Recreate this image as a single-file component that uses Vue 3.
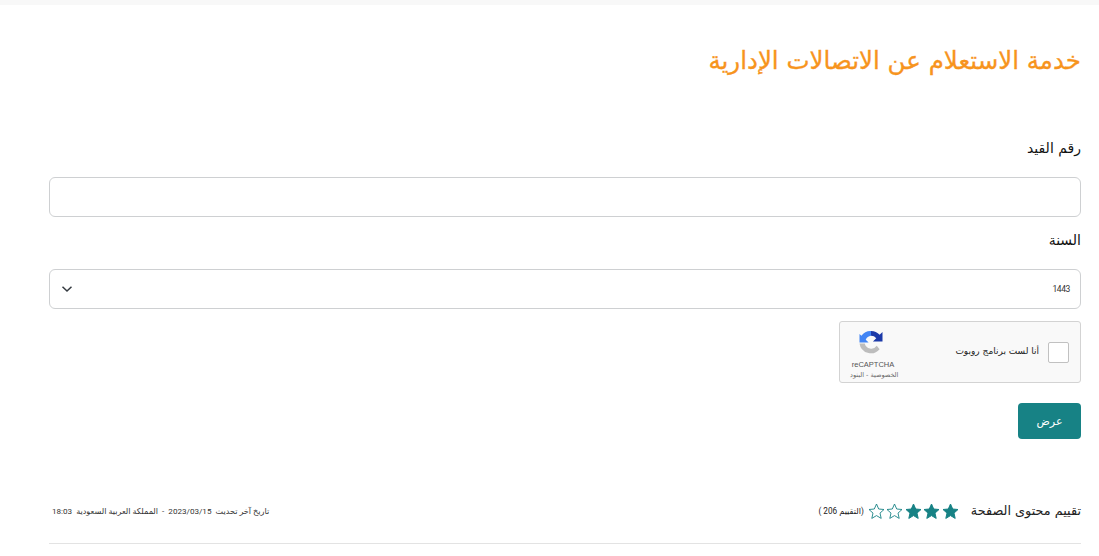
<script setup>
const filled = [1, 2, 3]
const empty = [4, 5]
const starPath = 'M8.5 1l2.2 5 5.3.5-4 3.6 1.2 5.3-4.7-2.8-4.7 2.8 1.2-5.3-4-3.6 5.3-.5z'
</script>

<template>
  <div class="page" dir="rtl">
    <div class="strip"></div>
    <main class="content">
      <h1 class="title">خدمة الاستعلام عن الاتصالات الإدارية</h1>

      <form class="form" @submit.prevent>
        <label class="label first">رقم القيد</label>
        <input class="control" type="text" />

        <label class="label second">السنة</label>
        <div class="select">
          <span class="select-value">1443</span>
          <svg class="chevron" width="12" height="8" viewBox="0 0 12 8" fill="none">
            <path d="M1.5 1.8 6 6l4.500-4.200" stroke="#343a40" stroke-width="1.500" />
          </svg>
        </div>

        <div class="captcha">
          <span class="check"></span>
          <span class="captcha-text">أنا لست برنامج روبوت</span>
          <div class="captcha-brand">
            <svg class="captcha-logo" width="24" height="23" viewBox="0 0 24 24">
              <path d="M12 0A12 12 0 0 1 21 4L24 1V11H14L17.500 7.500A7 7 0 0 0 12 5Z" fill="#1c3aa9" />
              <path d="M12 0A12 12 0 0 0 2 5L0 3V12H9.500L6.500 9A7 7 0 0 1 12 5Z" fill="#4285f4" />
              <path d="M0 13H5.500A7 7 0 0 0 18 15.500L21 19A12 12 0 0 1 0 13Z" fill="#bdbdbd" />
            </svg>
            <span class="brand-name" dir="ltr">reCAPTCHA</span>
            <span class="brand-links">الخصوصية - البنود</span>
          </div>
        </div>

        <button class="submit" type="submit">عرض</button>
      </form>

      <footer class="footer">
        <div class="rating">
          <span class="rating-label">تقييم محتوى الصفحة</span>
          <span class="stars">
            <svg v-for="s in filled" :key="s" width="17" height="17" viewBox="0 0 17 17">
              <path :d="starPath" fill="#178285" stroke="#178285" />
            </svg>
            <svg v-for="s in empty" :key="s" width="17" height="17" viewBox="0 0 17 17">
              <path :d="starPath" fill="none" stroke="#178285" stroke-width="0.900" />
            </svg>
          </span>
          <span class="rating-count">(التقييم 206 )</span>
        </div>
        <div class="updated">
          تاريخ آخر تحديث&nbsp; 2023/03/15 &nbsp;-&nbsp; المملكة العربية السعودية&nbsp; 18:03
        </div>
      </footer>
      <hr class="rule" />
    </main>
  </div>
</template>

<style>
html, body { margin: 0; background: #fff; }
</style>

<style scoped>
.page {
  width: 1099px;
  height: 556px;
  overflow: hidden;
  font-family: "DejaVu Sans", sans-serif;
  color: #1f1f1f;
}
.strip { height: 5px; background: #f8f8f8; }
.content { padding: 0 18px 0 49px; }
.title {
  margin: 41px 0 0;
  font-size: 24.500px;
  line-height: 30px;
  font-weight: 400;
  color: #f7941d;
  -webkit-text-stroke: 0.3px #f7941d;
}
.form { display: flex; flex-direction: column; align-items: flex-start; }
.label { font-size: 14px; line-height: 16px; color: #111; }
.label.first { margin-top: 64px; }
.label.second { margin-top: 15px; }
.control, .select {
  box-sizing: border-box;
  width: 100%;
  height: 40px;
  background: #fff;
  border: 1px solid #ced0d2;
  border-radius: 6px;
  outline: none;
}
.label.first + .control { margin-top: 21px; }
.label.second + .select { margin-top: 21px; }
.select {
  display: flex;
  align-items: center;
  justify-content: space-between;
  padding: 0 10px 0 11px;
}
.select-value { font: 8.500px Roboto, sans-serif; letter-spacing: -0.4px; color: #333; }
.captcha {
  box-sizing: border-box;
  width: 242px;
  height: 62px;
  margin-top: 12px;
  display: flex;
  align-items: center;
  padding: 0 11px;
  background: #f9f9f9;
  border: 1px solid #d3d3d3;
  border-radius: 3px;
}
.check {
  box-sizing: border-box;
  width: 21px;
  height: 21px;
  background: #fff;
  border: 1px solid #c1c1c1;
  border-radius: 2px;
}
.captcha-text { margin: 0 9px 2px 0; font-size: 9px; color: #222; }
.captcha-brand {
  margin-right: auto;
  align-self: flex-start;
  display: flex;
  flex-direction: column;
  align-items: center;
  width: 44px;
}
.captcha-logo { margin: 9px 4px 0 0; }
.brand-name { font: 7.500px "Liberation Sans", sans-serif; color: #555; margin-top: 6px; }
.brand-links { font-size: 6.500px; color: #666; margin: 2px 0 0 -1px; white-space: nowrap; align-self: flex-end; }
.submit {
  width: 63px;
  height: 36px;
  margin-top: 20px;
  border: 0;
  border-radius: 4px;
  background: #178285;
  color: #fff;
  font: 11px "DejaVu Sans", sans-serif;
}
.footer {
  margin-top: 62px;
  display: flex;
  align-items: center;
  justify-content: space-between;
}
.rating { display: flex; align-items: center; }
.rating-label { font-size: 12.800px; color: #222; }
.stars { display: flex; gap: 1.500px; margin: 2px 12px 0 0; }
.rating-count { margin-right: 4px; font: 8.200px Roboto, "DejaVu Sans", sans-serif; color: #222; }
.updated { margin-left: 3px; font: 8.100px Roboto, "DejaVu Sans", sans-serif; color: #333; }
.rule {
  margin: 23px 0 0;
  border: 0;
  border-top: 1px solid #e3e3e3;
}
</style>
